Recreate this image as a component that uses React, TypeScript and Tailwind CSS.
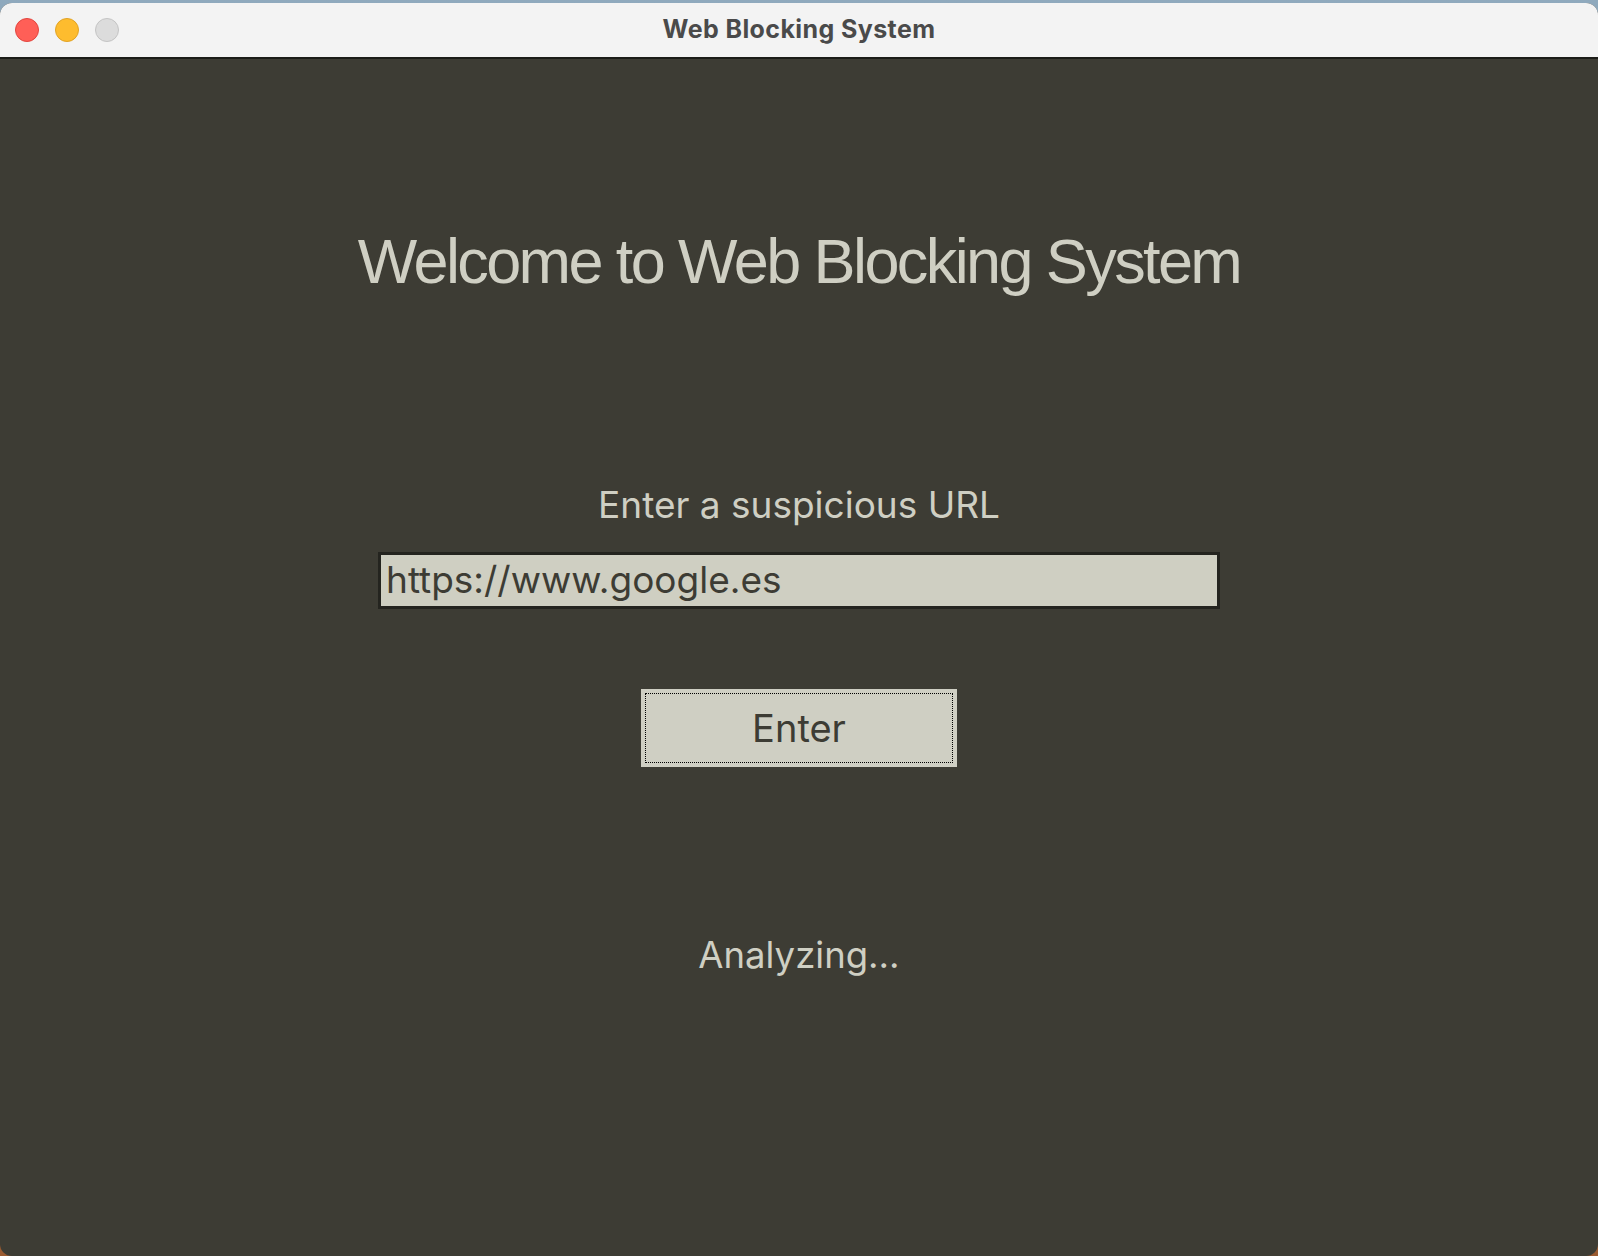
const font = { fontFamily: 'Inter, "Noto Sans", sans-serif' };
const helv = { fontFamily: '"Liberation Sans", Arial, sans-serif' };

function TitleBar() {
  return (
    <div className="relative flex h-[56px] items-center border-b-2 border-[#1c1c18] bg-[#f3f3f3]">
      <div className="flex items-center gap-[16px] pl-[15px]">
        <span className="h-[24px] w-[24px] rounded-full border border-[#e2463f] bg-[#ff5f57]" />
        <span className="h-[24px] w-[24px] rounded-full border border-[#e1a325] bg-[#febc2e]" />
        <span className="h-[24px] w-[24px] rounded-full border border-[#c4c4c4] bg-[#dcdcdc]" />
      </div>
      <div className="absolute inset-0 flex items-center justify-center pointer-events-none">
        <span className="text-[25px] font-bold tracking-[0.4px] text-[#4a4a4a]">Web Blocking System</span>
      </div>
    </div>
  );
}

export default function App() {
  return (
    <div
      className="h-[1256px] w-[1598px] bg-gradient-to-b from-[#8fa9bd] via-[#7d8a8c] to-[#9a5a30] pt-[3px]"
      style={font}
    >
      <div className="flex h-[1253px] flex-col overflow-hidden rounded-[12px] bg-[#3d3c34]">
        <TitleBar />
        <div className="flex flex-col items-center pt-[170px] text-[#cfcfc3]">
          <h1 className="text-[63px] font-normal leading-[64px] tracking-[-2.6px]" style={helv}>
            Welcome to Web Blocking System
          </h1>
          <p className="mt-[193px] text-[37px] leading-[37px]">Enter a suspicious URL</p>
          <div className="mt-[29px] h-[57px] w-[842px] border-[3px] border-[#24241f] bg-[#cfcfc2] px-[5px] text-[37px] leading-[50px] text-[#3d3c34]">
            https://www.google.es
          </div>
          <button className="mt-[80px] h-[78px] w-[316px] bg-[#cfcfc3] p-[4px] text-[38px] text-[#3d3c34]">
            <span className="flex h-full w-full items-center justify-center border border-dotted border-black">
              Enter
            </span>
          </button>
          <p className="mt-[169px] text-[36.5px] leading-[38px]">Analyzing...</p>
        </div>
      </div>
    </div>
  );
}
